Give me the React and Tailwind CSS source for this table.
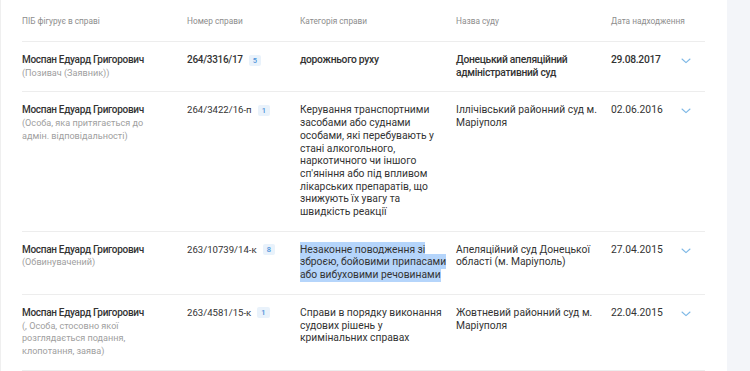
import React from "react";

const rows = [
  {
    name: "Моспан Едуард Григорович",
    role: "(Позивач (Заявник))",
    number: "264/3316/17",
    count: "5",
    category: ["дорожнього руху"],
    court: "Донецький апеляційний адміністративний суд",
    date: "29.08.2017",
    strong: true,
  },
  {
    name: "Моспан Едуард Григорович",
    role: "(Особа, яка притягається до адмін. відповідальності)",
    number: "264/3422/16-п",
    count: "1",
    category: [
      "Керування транспортними",
      "засобами або суднами",
      "особами, які перебувають у",
      "стані алкогольного,",
      "наркотичного чи іншого",
      "сп'яніння або під впливом",
      "лікарських препаратів, що",
      "знижують їх увагу та",
      "швидкість реакції",
    ],
    court: "Іллічівський районний суд м. Маріуполя",
    date: "02.06.2016",
  },
  {
    name: "Моспан Едуард Григорович",
    role: "(Обвинувачений)",
    number: "263/10739/14-к",
    count: "8",
    category: ["Незаконне поводження зі", "зброєю, бойовими припасами", "або вибуховими речовинами"],
    court: "Апеляційний суд Донецької області (м. Маріуполь)",
    date: "27.04.2015",
    selected: true,
  },
  {
    name: "Моспан Едуард Григорович",
    role: "(, Особа, стосовно якої розглядається подання, клопотання, заява)",
    number: "263/4581/15-к",
    count: "1",
    category: ["Справи в порядку виконання", "судових рішень у", "кримінальних справах"],
    court: "Жовтневий районний суд м. Маріуполя",
    date: "22.04.2015",
  },
];

const cols = "grid grid-cols-[165px_113px_156px_155px_69px_25px]";

function Chevron() {
  return (
    <svg width="10" height="6" viewBox="0 0 10 6" fill="none" className="mt-[4px]">
      <path d="M1 1l4 3.6L9 1" stroke="#7db8e6" strokeWidth="1.1" strokeLinecap="round" strokeLinejoin="round" />
    </svg>
  );
}

export default function App() {
  return (
    <div
      className="flex h-[371px] w-[750px] overflow-hidden bg-white text-[#333333]"
      style={{ fontFamily: "Roboto, 'Liberation Sans', sans-serif" }}
    >
      <div className="w-[727px] border-l border-[#efefef] pl-[21px]">
        <div className="w-[683px]">
          <div className={`${cols} h-[42px] items-center border-b border-[#ededed] pt-[1px] text-[8.3px] text-[#8d8d8d]`}>
            <div>ПІБ фігурує в справі</div>
            <div>Номер справи</div>
            <div>Категорія справи</div>
            <div>Назва суду</div>
            <div className="col-span-2">Дата надходження</div>
          </div>
          {rows.map((r, i) => {
            const strong = r.strong ? "font-medium tracking-[-0.3px]" : "";
            return (
              <div key={i} className={`${cols} border-b border-[#ededed] py-3 text-[10.3px] leading-[12.7px]`}>
                <div className="pr-[25px]">
                  <div className="text-[10px] font-medium tracking-[-0.3px]">{r.name}</div>
                  <div className="text-[9.1px] text-[#a0a0a0]">{r.role}</div>
                </div>
                <div className="flex items-start">
                  <span className={r.strong ? "text-[10px] " + strong : "text-[9.6px]"}>{r.number}</span>
                  <span className="ml-[6px] mt-[0.5px] rounded-[2px] bg-[#e9f2fb] px-[4px] text-[7.5px] leading-[11px] font-medium text-[#4a90d9]">
                    {r.count}
                  </span>
                </div>
                <div className={`whitespace-nowrap ${strong}`}>
                  {r.category.map((line, j) => (
                    <div key={j}>
                      {r.selected ? <span className="bg-[#b5d5fb] py-[1px]">{line}</span> : line}
                    </div>
                  ))}
                </div>
                <div className={`pr-3 ${strong}`}>{r.court}</div>
                <div className={strong}>{r.date}</div>
                <div className="flex justify-start pl-[1px]">
                  <Chevron />
                </div>
              </div>
            );
          })}
        </div>
      </div>
      <div className="flex-1 bg-[#f3f5f9]" />
    </div>
  );
}
